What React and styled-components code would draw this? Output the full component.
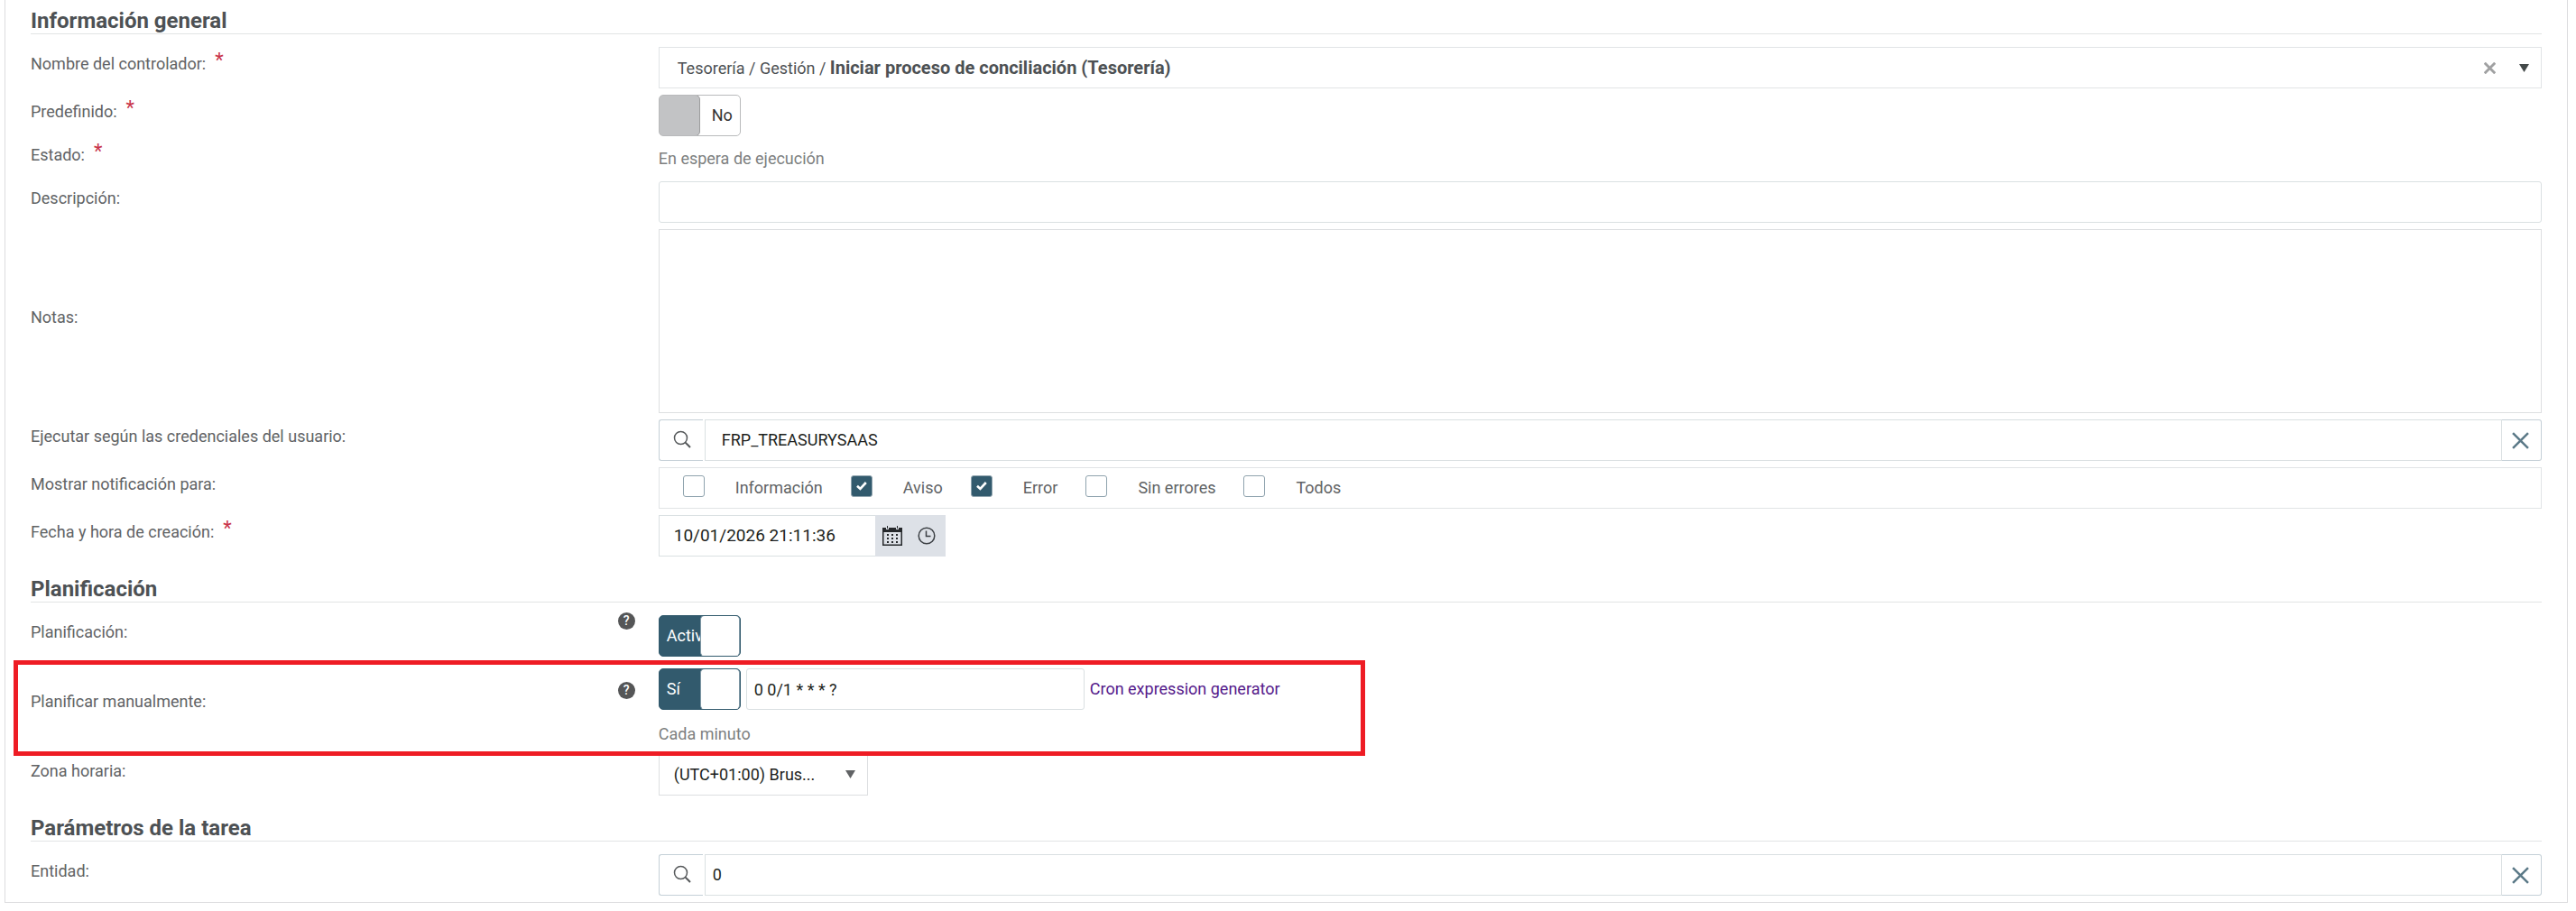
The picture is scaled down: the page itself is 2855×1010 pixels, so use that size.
import React, { useState } from 'react'
import styled, { createGlobalStyle } from 'styled-components'

const GlobalStyle = createGlobalStyle`
  * {
    box-sizing: border-box;
  }

  body {
    margin: 0;
    background: #fff;
    color: #616365;
    font-family: Roboto, "Liberation Sans", sans-serif;
    font-size: 18px;
    line-height: 24px;
  }

  button, input, select, textarea {
    font: inherit;
    color: inherit;
  }
`

const Panel = styled.form`
  display: flex;
  flex-direction: column;
  gap: 24px;
  margin: 0 9px 9px 5px;
  padding: 11px 28px 7px;
  border: 1px solid #dcdcde;
  border-top: 0;
`

const Heading = styled.h2`
  margin: 0 0 14px;
  padding-bottom: 2px;
  border-bottom: 1px solid #e2e4e5;
  color: #4d5154;
  font-size: 24px;
  font-weight: 700;
  line-height: 24px;
`

const Rows = styled.div`
  display: flex;
  flex-direction: column;
  gap: 7px;
`

const Row = styled.div`
  position: relative;
  display: grid;
  grid-template-columns: 25% 1fr;
  align-items: center;
`

const LabelCell = styled.div`
  display: flex;
  align-items: center;
  justify-content: space-between;
  padding: 0 26px 8px 0;
`

const Required = styled.span`
  margin-left: 10px;
  color: #c9354a;
  font-size: 22px;
  line-height: 0;
  vertical-align: 3px;
`

const HelpButton = styled.button`
  width: 19px;
  height: 19px;
  margin: -17px 0 9px;
  padding: 0;
  border: 0;
  border-radius: 50%;
  background: #555657;
  color: #fff;
  font-size: 14px;
  font-weight: 500;
  line-height: 19px;
`

const Highlight = styled.div`
  position: absolute;
  z-index: 1;
  top: -3px;
  bottom: -9px;
  left: -19px;
  width: 1498px;
  border: 5px solid #ee1c24;
  pointer-events: none;
`

const Box = styled.div`
  display: flex;
  align-items: center;
  height: 46px;
  border: 1px solid #e1e4e6;
`

const Combo = styled.button`
  flex: 1;
  padding: 0 20px;
  border: 0;
  background: none;
  color: #4d5154;
  text-align: left;

  b {
    font-size: 20px;
  }
`

const IconButton = styled.button`
  display: flex;
  align-items: center;
  justify-content: center;
  width: 38px;
  height: 38px;
  padding: 0;
  border: 0;
  background: none;
  color: ${(props) => props.$color || '#434949'};
`

const Status = styled.output`
  display: flex;
  align-items: center;
  height: ${(props) => (props.$compact ? '24px' : '36px')};
  color: #7d7f80;
`

const TextInput = styled.input`
  width: ${(props) => props.$width || '100%'};
  height: 46px;
  padding: 0 8px;
  border: 1px solid #dae0e2;
  border-radius: 3px;
  background: #fff;
  color: #1d1f20;
`

const Notes = styled.textarea`
  display: block;
  width: 100%;
  height: 204px;
  border: 1px solid #dddfe1;
  resize: none;
`

const Lookup = styled.div`
  display: flex;
  height: 46px;
`

const LookupSearch = styled.button`
  display: flex;
  align-items: center;
  justify-content: center;
  width: 49px;
  margin-right: 2px;
  padding: 0 0 2px 2px;
  border: 1px solid #c5d0d7;
  border-right: 0;
  border-radius: 3px 0 0 3px;
  background: none;
  color: #55585a;
`

const LookupInput = styled.input`
  flex: 1;
  min-width: 0;
  padding: 0 ${(props) => (props.$indent ? '18px' : '8px')};
  border: 1px solid #dae0e2;
  background: none;
  color: #1d1f20;
`

const LookupClear = styled.button`
  display: flex;
  align-items: center;
  justify-content: center;
  width: 44px;
  padding: 0 2px 0 0;
  border: 1px solid #c5d0d7;
  border-left: 0;
  border-radius: 0 3px 3px 0;
  background: none;
  color: #5b7987;
`

const Checks = styled(Box)`
  gap: 31px;
  padding: 0 26px;
`

const CheckItem = styled.label`
  display: flex;
  align-items: center;
  gap: 34px;
`

const CheckMark = styled.span`
  position: relative;
  display: flex;
  align-items: center;
  justify-content: center;
  width: 24px;
  height: 24px;
  margin-bottom: 4px;
  border: 1px solid #8fa3ae;
  border-radius: 3px;
  background: ${(props) => (props.$checked ? '#325a6d' : '#fff')};
`

const HiddenCheck = styled.input`
  position: absolute;
  inset: 0;
  width: 100%;
  height: 100%;
  margin: 0;
  opacity: 0;
`

const Track = styled.span`
  position: relative;
  display: flex;
  align-items: center;
  justify-content: ${(props) => (props.$on ? 'flex-start' : 'flex-end')};
  flex: none;
  width: 91px;
  height: 46px;
  padding: 0 8px;
  overflow: hidden;
  border: 1px solid ${(props) => (props.$on ? '#325a6d' : '#b9babb')};
  border-radius: 5px;
  background: ${(props) => (props.$on ? '#325a6d' : '#fff')};
  color: ${(props) => (props.$on ? '#fff' : '#333')};
`

const Thumb = styled.span`
  position: absolute;
  top: -1px;
  bottom: -1px;
  ${(props) => (props.$on ? 'right: 0;' : 'left: -1px;')}
  width: ${(props) => (props.$on ? '44px' : '46px')};
  border: 1px solid ${(props) => (props.$on ? '#7f98a5' : '#9c9d9e')};
  border-bottom-color: ${(props) => (props.$on ? '#e4e6e7' : '#9c9d9e')};
  border-radius: 5px;
  background: ${(props) => (props.$on ? '#fff' : '#c2c3c5')};
`

const DateField = styled.div`
  display: flex;
  width: 318px;
  height: 46px;
`

const DateInput = styled.input`
  flex: 1;
  min-width: 0;
  padding: 0 16px;
  border: 1px solid #dae0e2;
  border-right: 0;
  color: #1d1f20;
  font-size: 19px;
`

const DateButtons = styled.div`
  display: flex;
  align-items: center;
  width: 78px;
  background: #dde1e7;
`

const Manual = styled.div`
  display: flex;
  flex-direction: column;
  gap: 15px;
  padding: 6px 0 3px;
`

const ManualFields = styled.div`
  display: flex;
  align-items: center;
  gap: 6px;
`

const Link = styled.a`
  color: #551a8b;
  text-decoration: none;
`

const SelectWrap = styled.div`
  position: relative;
  width: 232px;
  height: 46px;

  svg {
    position: absolute;
    top: 18px;
    right: 14px;
    pointer-events: none;
  }
`

const Select = styled.select`
  width: 100%;
  height: 46px;
  padding: 0 16px;
  appearance: none;
  border: 1px solid #dddfe1;
  background: none;
  color: #1d1f20;
`

const SearchIcon = () => (
  <svg width="20" height="20" viewBox="0 0 20 20" fill="none" stroke="currentColor">
    <circle cx="8.5" cy="8.5" r="7" strokeWidth="1.5" />
    <path d="M13.6 13.6L19 19" strokeWidth="2" />
  </svg>
)

const CrossIcon = ({ size, stroke }) => (
  <svg width={size} height={size} viewBox="0 0 18 18" fill="none" stroke="currentColor" strokeWidth={stroke}>
    <path d="M1 1L17 17M17 1L1 17" />
  </svg>
)

const ArrowIcon = () => (
  <svg width="11" height="9" viewBox="0 0 11 9" fill="currentColor">
    <path d="M0 0H11L5.5 9Z" />
  </svg>
)

const TickIcon = () => (
  <svg width="12" height="10" viewBox="0 0 12 10" fill="none" stroke="#fff" strokeWidth="2.6">
    <path d="M1 4.8L4.4 8L10.8 1" />
  </svg>
)

const CalendarIcon = () => (
  <svg width="22" height="22" viewBox="0 0 22 22" fill="#26292c">
    <path fillRule="evenodd" d="M0 2H4V4H7V2H15V4H18V2H22V22H0ZM1.5 7V20.5H20.5V7Z" />
    <path d="M5 0H6V3H5ZM16 0H17V3H16Z" />
    <path d="M5 9H7V11H5ZM10 9H12V11H10ZM15 9H17V11H15ZM5 13H7V15H5ZM10 13H12V15H10ZM15 13H17V15H15ZM5 17H7V19H5ZM10 17H12V19H10ZM15 17H17V19H15Z" />
  </svg>
)

const ClockIcon = () => (
  <svg width="20" height="20" viewBox="0 0 20 20" fill="none" stroke="#3b3f43" strokeWidth="1.5">
    <circle cx="10" cy="10" r="8.8" />
    <path d="M9.5 4.5V10.5H14.5" />
  </svg>
)

const Field = ({ id, label, required, help, highlight, children }) => (
  <Row>
    <LabelCell>
      <label htmlFor={id}>
        {label}
        {required && <Required>*</Required>}
      </label>
      {help && <HelpButton type="button">?</HelpButton>}
    </LabelCell>
    {children}
    {highlight && <Highlight />}
  </Row>
)

const Toggle = ({ id, initial, onText, offText }) => {
  const [on, setOn] = useState(initial)

  return (
    <Track $on={on}>
      {on ? onText : offText}
      <Thumb $on={on} />
      <HiddenCheck id={id} type="checkbox" role="switch" checked={on} onChange={() => setOn(!on)} />
    </Track>
  )
}

const LookupField = ({ id, value, indent }) => {
  const [text, setText] = useState(value)

  return (
    <Lookup>
      <LookupSearch type="button"><SearchIcon /></LookupSearch>
      <LookupInput id={id} $indent={indent} value={text} onChange={(e) => setText(e.target.value)} />
      <LookupClear type="button" onClick={() => setText('')}><CrossIcon size={19} stroke={2.4} /></LookupClear>
    </Lookup>
  )
}

const notifications = [
  { name: 'Información', checked: false },
  { name: 'Aviso', checked: true },
  { name: 'Error', checked: true },
  { name: 'Sin errores', checked: false },
  { name: 'Todos', checked: false }
]

const Notifications = () => {
  const [items, setItems] = useState(notifications)

  const toggleItem = (name) => {
    setItems(items.map((item) => (item.name === name ? { ...item, checked: !item.checked } : item)))
  }

  return (
    <Checks>
      {items.map((item, index) => (
        <CheckItem key={item.name}>
          <CheckMark $checked={item.checked}>
            {item.checked && <TickIcon />}
            <HiddenCheck
              id={index === 0 ? 'notify' : undefined}
              type="checkbox"
              checked={item.checked}
              onChange={() => toggleItem(item.name)} />
          </CheckMark>
          {item.name}
        </CheckItem>
      ))}
    </Checks>
  )
}

const App = () => (
  <>
    <GlobalStyle />
    <Panel>
      <section>
        <Heading>Información general</Heading>
        <Rows>
          <Field id="controller" label="Nombre del controlador:" required>
            <Box>
              <Combo id="controller" type="button">
                Tesorería / Gestión / <b>Iniciar proceso de conciliación (Tesorería)</b>
              </Combo>
              <IconButton type="button" $color="#a0a1a2"><CrossIcon size={13} stroke={4} /></IconButton>
              <IconButton type="button"><ArrowIcon /></IconButton>
            </Box>
          </Field>
          <Field id="predefined" label="Predefinido:" required>
            <Toggle id="predefined" initial={false} onText="Sí" offText="No" />
          </Field>
          <Field id="status" label="Estado:" required>
            <Status id="status">En espera de ejecución</Status>
          </Field>
          <Field id="description" label="Descripción:">
            <TextInput id="description" />
          </Field>
          <Field id="notes" label="Notas:">
            <Notes id="notes" />
          </Field>
          <Field id="user" label="Ejecutar según las credenciales del usuario:">
            <LookupField id="user" value="FRP_TREASURYSAAS" indent />
          </Field>
          <Field id="notify" label="Mostrar notificación para:">
            <Notifications />
          </Field>
          <Field id="created" label="Fecha y hora de creación:" required>
            <DateField>
              <DateInput id="created" defaultValue="10/01/2026 21:11:36" />
              <DateButtons>
                <IconButton type="button"><CalendarIcon /></IconButton>
                <IconButton type="button"><ClockIcon /></IconButton>
              </DateButtons>
            </DateField>
          </Field>
        </Rows>
      </section>

      <section>
        <Heading>Planificación</Heading>
        <Rows>
          <Field id="scheduling" label="Planificación:" help>
            <Toggle id="scheduling" initial onText="Activ" offText="No" />
          </Field>
          <Field id="manual" label="Planificar manualmente:" help highlight>
            <Manual>
              <ManualFields>
                <Toggle id="manual" initial onText="Sí" offText="No" />
                <TextInput $width="375px" aria-label="Cron" defaultValue="0 0/1 * * * ?" />
                <Link href="#cron">Cron expression generator</Link>
              </ManualFields>
              <Status $compact>Cada minuto</Status>
            </Manual>
          </Field>
          <Field id="timezone" label="Zona horaria:">
            <SelectWrap>
              <Select id="timezone">
                <option>(UTC+01:00) Brus...</option>
              </Select>
              <ArrowIcon />
            </SelectWrap>
          </Field>
        </Rows>
      </section>

      <section>
        <Heading>Parámetros de la tarea</Heading>
        <Rows>
          <Field id="entity" label="Entidad:">
            <LookupField id="entity" value="0" />
          </Field>
        </Rows>
      </section>
    </Panel>
  </>
)

export default App
